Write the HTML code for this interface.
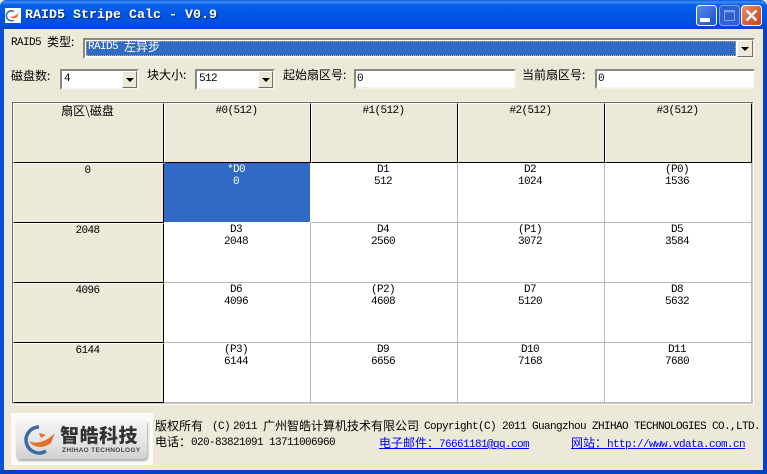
<!DOCTYPE html>
<html><head><meta charset="utf-8">
<style>
*{box-sizing:border-box}
html,body{margin:0;padding:0;width:767px;height:474px;overflow:hidden;background:#ECE9D8}
body{position:relative;font-family:"Liberation Mono","Noto Sans CJK SC",monospace;font-size:11px;letter-spacing:-.6px;color:#000}
.a{position:absolute;white-space:pre;line-height:12px}
.c{font-family:"Noto Sans CJK SC","WenQuanYi Zen Hei",sans-serif;font-size:12px;line-height:12px;letter-spacing:0}
.box{position:absolute;background:#fff;border:2px solid;border-color:#8a887c #f4f2e8 #f4f2e8 #8a887c}
.btn{position:absolute;background:#ECE9D8;border:1px solid;border-color:#fff #716f64 #716f64 #fff}
.btn:after{content:"";position:absolute;left:50%;top:50%;margin:-2px 0 0 -4px;border:4px solid transparent;border-top:4px solid #000;border-bottom:0}
.cell{position:absolute;text-align:center;line-height:12px;padding:1px 2px 0 0;white-space:pre}
.h{background:#ECE9D8;border-right:1px solid #000;border-bottom:1px solid #000;border-left:1px solid #fff;border-top:1px solid #fff}
.w{background:#fff;border-right:1px solid #b8b8b8;border-bottom:1px solid #b8b8b8}
a{color:#0000ff;text-decoration:underline}
</style></head><body>
<div style="position:absolute;left:0;top:0;width:767px;height:29px;background:linear-gradient(#0a5ae0 0,#3c8ef6 2px,#0a5fe8 5px,#0055e5 14px,#0050dc 24px,#0345c8 29px);border-radius:6px 6px 0 0"></div>
<div style="position:absolute;left:0;top:29px;width:4px;height:445px;background:#0a4fd8"></div>
<div style="position:absolute;right:0;top:29px;width:4px;height:445px;background:#0a3fc8"></div>
<div style="position:absolute;left:0;top:470px;width:767px;height:4px;background:#0a3fc8"></div>

<svg style="position:absolute;left:5px;top:8px" width="16" height="15" viewBox="0 0 16 15">
<rect width="16" height="15" fill="#fff"/>
<path d="M9 3.500A5 5 0 1 0 9 12" fill="none" stroke="#3f6fa8" stroke-width="1.600"/>
<path d="M5 8.500C8 9.500 11 7.500 14 4.500L12 9.500C9 10.500 6 10.500 5 8.500Z" fill="#e86a20"/>
</svg>
<div class="a" style="left:25px;top:8px;color:#0a2a80;font-weight:bold;font-size:13.33px;letter-spacing:0;line-height:15px;transform:translate(1px,1px)">RAID5 Stripe Calc - V0.9</div>
<div class="a" style="left:25px;top:8px;color:#fff;font-weight:bold;font-size:13.33px;letter-spacing:0;line-height:15px">RAID5 Stripe Calc - V0.9</div>

<svg style="position:absolute;left:695px;top:5px" width="68" height="22" viewBox="0 0 68 22">
<defs>
<linearGradient id="b" x1="0" y1="0" x2="1" y2="1"><stop offset="0" stop-color="#5a8cf0"/><stop offset="1" stop-color="#1a4cc8"/></linearGradient>
<linearGradient id="r" x1="0" y1="0" x2="1" y2="1"><stop offset="0" stop-color="#ee9070"/><stop offset="1" stop-color="#c83a14"/></linearGradient>
</defs>
<rect x="1.500" y="0.500" width="20" height="20" rx="3" fill="url(#b)" stroke="#fff"/>
<rect x="5" y="13" width="10" height="4" fill="#fff"/>
<rect x="24.500" y="0.500" width="20" height="20" rx="3" fill="#2f5fd0" stroke="#7fa0ea"/>
<rect x="29.500" y="5.500" width="10" height="10" fill="none" stroke="#7f9fe8"/><rect x="29" y="5" width="11" height="2.400" fill="#7f9fe8"/>
<rect x="46.500" y="0.500" width="20" height="20" rx="3" fill="url(#r)" stroke="#fff"/>
<path d="M51.500 5.500L61.500 15.500M61.500 5.500L51.500 15.500" stroke="#fff" stroke-width="2.400"/>
</svg>

<div class="a" style="left:11px;top:37px">RAID5</div>
<div class="a c" style="left:47px;top:36px">类型:</div>
<div class="box" style="left:83px;top:38px;width:672px;height:21px"></div>
<div style="position:absolute;left:86px;top:41px;width:650px;height:15px;background:#316AC5;outline:1px dotted #c9b27a;outline-offset:-1px"></div>
<div class="a" style="left:88px;top:41px;color:#fff">RAID5</div>
<div class="a c" style="left:124px;top:41px;color:#fff">左异步</div>
<div class="btn" style="left:737px;top:40px;width:16px;height:17px"></div>

<div class="a c" style="left:11px;top:70px">磁盘数:</div>
<div class="box" style="left:60px;top:69px;width:79px;height:21px"></div>
<div class="a" style="left:64px;top:73px">4</div>
<div class="btn" style="left:122px;top:71px;width:15px;height:17px"></div>

<div class="a c" style="left:147px;top:69px">块大小:</div>
<div class="box" style="left:195px;top:69px;width:80px;height:21px"></div>
<div class="a" style="left:199px;top:73px">512</div>
<div class="btn" style="left:258px;top:71px;width:15px;height:17px"></div>

<div class="a c" style="left:283px;top:69px">起始扇区号:</div>
<div class="box" style="left:354px;top:69px;width:162px;height:20px"></div>
<div class="a" style="left:357px;top:73px">0</div>

<div class="a c" style="left:522px;top:69px">当前扇区号:</div>
<div class="box" style="left:595px;top:69px;width:160px;height:20px"></div>
<div class="a" style="left:598px;top:73px">0</div>

<div style="position:absolute;left:11px;top:101px;width:743px;height:304px;background:#fff;border:1px solid;border-color:#f6f4ea #fbfaf3 #fbfaf3 #f6f4ea"></div>
<div style="position:absolute;left:12px;top:102px;width:741px;height:1px;background:#666"></div>
<div style="position:absolute;left:12px;top:102px;width:1px;height:301px;background:#666"></div>
<div style="position:absolute;left:752px;top:103px;width:1px;height:301px;background:#c8c8c8"></div>
<div style="position:absolute;left:12px;top:403px;width:741px;height:1px;background:#c8c8c8"></div>

<div class="cell h" style="left:13px;top:103px;width:151px;height:60px"><span class="c">扇区\磁盘</span></div>
<div class="cell h" style="left:164px;top:103px;width:147px;height:60px">#0(512)</div>
<div class="cell h" style="left:311px;top:103px;width:147px;height:60px">#1(512)</div>
<div class="cell h" style="left:458px;top:103px;width:147px;height:60px">#2(512)</div>
<div class="cell h" style="left:605px;top:103px;width:147px;height:60px">#3(512)</div>

<div class="cell h" style="left:13px;top:163px;width:151px;height:60px">0</div>
<div class="cell" style="left:164px;top:163px;width:146px;height:59px;background:#316AC5;color:#fff">*D0
0</div>
<div class="cell w" style="left:311px;top:163px;width:147px;height:60px">D1
512</div>
<div class="cell w" style="left:458px;top:163px;width:147px;height:60px">D2
1024</div>
<div class="cell w" style="left:605px;top:163px;width:147px;height:60px">(P0)
1536</div>

<div class="cell h" style="left:13px;top:223px;width:151px;height:60px">2048</div>
<div class="cell w" style="left:164px;top:223px;width:147px;height:60px">D3
2048</div>
<div class="cell w" style="left:311px;top:223px;width:147px;height:60px">D4
2560</div>
<div class="cell w" style="left:458px;top:223px;width:147px;height:60px">(P1)
3072</div>
<div class="cell w" style="left:605px;top:223px;width:147px;height:60px">D5
3584</div>

<div class="cell h" style="left:13px;top:283px;width:151px;height:60px">4096</div>
<div class="cell w" style="left:164px;top:283px;width:147px;height:60px">D6
4096</div>
<div class="cell w" style="left:311px;top:283px;width:147px;height:60px">(P2)
4608</div>
<div class="cell w" style="left:458px;top:283px;width:147px;height:60px">D7
5120</div>
<div class="cell w" style="left:605px;top:283px;width:147px;height:60px">D8
5632</div>

<div class="cell h" style="left:13px;top:343px;width:151px;height:60px">6144</div>
<div class="cell w" style="left:164px;top:343px;width:147px;height:60px">(P3)
6144</div>
<div class="cell w" style="left:311px;top:343px;width:147px;height:60px">D9
6656</div>
<div class="cell w" style="left:458px;top:343px;width:147px;height:60px">D10
7168</div>
<div class="cell w" style="left:605px;top:343px;width:147px;height:60px">D11
7680</div>

<div style="position:absolute;left:11px;top:413px;width:142px;height:52px;background:#fafaf6"></div>
<div style="position:absolute;left:16px;top:420px;width:131px;height:39px;background:linear-gradient(#f4f4f4,#e4e4e4 60%,#cfcfcf);border-radius:4px;box-shadow:1px 2px 2px #aaa"></div>
<svg style="position:absolute;left:20px;top:424px" width="38" height="32" viewBox="0 0 38 32">
<path d="M19 3A13 13 0 1 0 26 27" fill="none" stroke="#3b6aa0" stroke-width="3.500"/>
<path d="M9 17C17 21 27 17 35 9L31 19C25 24 14 25 9 17Z" fill="#e0702a"/>
<path d="M19 9L26 11L21 14Z" fill="#e0702a"/>
</svg>
<div class="a" style="left:60px;top:424px;font-family:'Noto Sans CJK SC',sans-serif;font-weight:900;font-size:19px;line-height:22px;letter-spacing:.5px;color:#333">智皓科技</div>
<div class="a" style="left:62px;top:447px;font-family:'Liberation Sans',sans-serif;font-size:6.500px;line-height:8px;font-weight:bold;color:#444;letter-spacing:.35px">ZHIHAO TECHNOLOGY</div>

<div class="a c" style="left:155px;top:420px">版权所有</div>
<div class="a" style="left:212px;top:421px">(C)</div>
<div class="a" style="left:233px;top:421px">2011</div>
<div class="a c" style="left:263px;top:420px">广州智皓计算机技术有限公司</div>
<div class="a" style="left:424px;top:421px">Copyright(C) 2011 Guangzhou ZHIHAO TECHNOLOGIES CO.,LTD.</div>
<div class="a c" style="left:155px;top:436px">电话：</div>
<div class="a" style="left:191px;top:437px">020-83821091 13711006960</div>
<a class="a" style="left:379px;top:437px"><span class="c">电子邮件：</span>76661181@qq.com</a>
<a class="a" style="left:571px;top:437px"><span class="c">网站：</span>http://www.vdata.com.cn</a>
</body></html>
